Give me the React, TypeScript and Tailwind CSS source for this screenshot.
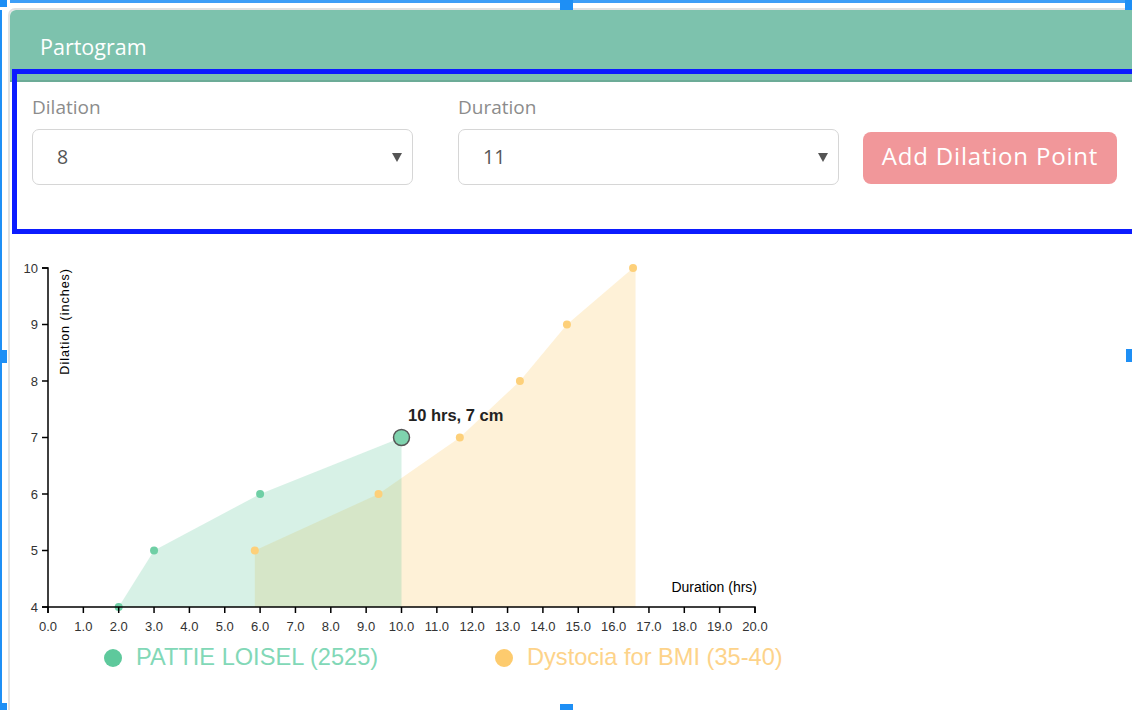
import React from 'react'

const X0 = 48
const XS = 35.35
const Y4 = 607
const YS = 56.5

const px = (h: number) => X0 + h * XS
const py = (d: number) => Y4 - (d - 4) * YS

const patient = [
  [2, 4],
  [3, 5],
  [6, 6],
  [10, 7]
]

const curve = [
  [5.85, 5],
  [9.35, 6],
  [11.65, 7],
  [13.35, 8],
  [14.68, 9],
  [16.55, 10]
]

const Arrow = () => (
  <svg width="10" height="9" viewBox="0 0 10 9" className="shrink-0">
    <path d="M0 0 H10 L5 9 Z" fill="#555" />
  </svg>
)

const Field: React.FC<{ label: string; value: string }> = ({ label, value }) => (
  <div className="flex w-[381px] flex-col">
    <label className="h-[24px] text-[19px] leading-[24px] text-[#8c8c8c]">{label}</label>
    <div className="mt-[10px] flex h-[56px] items-center justify-between rounded-[7px] border border-[#d6d6d6] pl-[24px] pr-[10px]">
      <span className="text-[19.5px] text-[#555]">{value}</span>
      <Arrow />
    </div>
  </div>
)

const Chart = () => {
  const greenPath =
    `M${px(2)},${Y4} ` +
    patient.slice(1).map(([h, d]) => `L${px(h)},${py(d)}`).join(' ') +
    ` L${px(10)},${Y4} Z`
  const orangePath =
    `M${px(5.85)},${Y4} ` +
    curve.map(([h, d]) => `L${px(h)},${py(d)}`).join(' ') +
    ` L${px(16.62)},${py(10)} L${px(16.62)},${Y4} Z`

  return (
    <svg width="800" height="400" className="block" style={{ fontFamily: '"Liberation Sans", Arial, sans-serif' }}>
      <g transform="translate(-10,-240)">
        <path d={orangePath} fill="#fdd07a" fillOpacity={0.3} />
        <path d={greenPath} fill="#5ec99c" fillOpacity={0.25} />

        {curve.map(([h, d]) => (
          <circle key={`o${h}`} cx={px(h)} cy={py(d)} r={4} fill="#fdd07a" />
        ))}
        {patient.slice(0, 3).map(([h, d]) => (
          <circle key={`g${h}`} cx={px(h)} cy={py(d)} r={4} fill="#6fcfa5" />
        ))}
        <circle cx={px(10)} cy={py(7)} r={8} fill="#7fd3ae" stroke="#555" strokeWidth={1.5} />
        <text x={408} y={421} fontSize={16.5} fontWeight="bold" fill="#222">
          10 hrs, 7 cm
        </text>

        <path d={`M42,${py(10)} H${X0} V${Y4} H42`} fill="none" stroke="#000" strokeWidth={1.5} />
        {[4, 5, 6, 7, 8, 9, 10].map(v => (
          <g key={v}>
            <line x1={42} x2={X0} y1={py(v)} y2={py(v)} stroke="#000" strokeWidth={1.5} />
            <text x={38} y={py(v) + 4.5} fontSize={13} textAnchor="end" fill="#333">
              {v}
            </text>
          </g>
        ))}
        <text
          transform={`translate(69,${py(10)}) rotate(-90)`}
          fontSize={12.5}
          letterSpacing={1}
          textAnchor="end"
          fill="#000"
        >
          Dilation (inches)
        </text>

        <path d={`M${X0},613 V${Y4} H${px(20)} V613`} fill="none" stroke="#000" strokeWidth={1.5} />
        {Array.from({ length: 21 }, (_, i) => (
          <g key={i}>
            <line x1={px(i)} x2={px(i)} y1={Y4} y2={613} stroke="#000" strokeWidth={1.5} />
            <text x={px(i)} y={631} fontSize={13} textAnchor="middle" fill="#333">
              {`${i}.0`}
            </text>
          </g>
        ))}
        <text x={757} y={592} fontSize={14} textAnchor="end" fill="#000">
          Duration (hrs)
        </text>
      </g>
    </svg>
  )
}

const Handle: React.FC<{ className: string }> = ({ className }) => (
  <div className={`absolute bg-[#1e8ff5] ${className}`} />
)

export default function App() {
  return (
    <div className="relative h-[710px] w-[1132px] overflow-hidden bg-white font-['Open_Sans',sans-serif]">
      <div className="ml-[8px] mt-[8px] h-[702px] rounded-tl-[7px] border-l-2 border-t-2 border-[#e2e2e2]">
        <div className="flex h-[72px] items-center rounded-tl-[6px] border-b-2 border-[#6cab97] bg-[#7dc2ad] pl-[30px] pt-[4px]">
          <span className="text-[21.5px] text-white">Partogram</span>
        </div>
        <div className="flex h-[158px] items-start pl-[22px] pt-[13px]">
          <Field label="Dilation" value="8" />
          <div className="ml-[45px]">
            <Field label="Duration" value="11" />
          </div>
          <button className="ml-[24px] mt-[37px] flex h-[52px] w-[254px] items-center justify-center rounded-[8px] bg-[#f1979a] pb-[4px] text-[24px] tracking-[0.8px] text-white">
            Add Dilation Point
          </button>
        </div>
        <Chart />
        <div className="flex h-[36px] items-center pl-[94px] font-['Liberation_Sans',Arial,sans-serif] text-[23.6px]">
          <div className="flex w-[391px] items-center gap-[14px]">
            <span className="h-[18px] w-[18px] rounded-full bg-[#5ec99c]" />
            <span className="text-[#82d8b7]">PATTIE LOISEL (2525)</span>
          </div>
          <div className="flex items-center gap-[14px]">
            <span className="h-[18px] w-[18px] rounded-full bg-[#fdcb6e]" />
            <span className="text-[#fdd38a]">Dystocia for BMI (35-40)</span>
          </div>
        </div>
      </div>

      {/* selection frame of the form row */}
      <div className="absolute left-[12px] top-[69px] h-[165px] w-[1140px] border-[5px] border-[#0c1cff]" />

      {/* outer selection frame and handles */}
      <div className="absolute left-[10px] right-0 top-0 h-[3px] bg-[#3d9ef7]" />
      <div className="absolute bottom-0 left-0 top-[10px] w-[2px] bg-[#1e8ff5]" />
      <Handle className="left-0 top-0 h-[7px] w-[7px]" />
      <Handle className="left-[560px] top-0 h-[10px] w-[13px]" />
      <Handle className="right-0 top-0 h-[10px] w-[7px]" />
      <Handle className="left-0 top-[350px] h-[13px] w-[7px]" />
      <Handle className="right-0 top-[349px] h-[13px] w-[6px]" />
      <Handle className="bottom-0 left-0 h-[7px] w-[7px]" />
      <Handle className="bottom-0 left-[560px] h-[6px] w-[13px]" />
    </div>
  )
}
